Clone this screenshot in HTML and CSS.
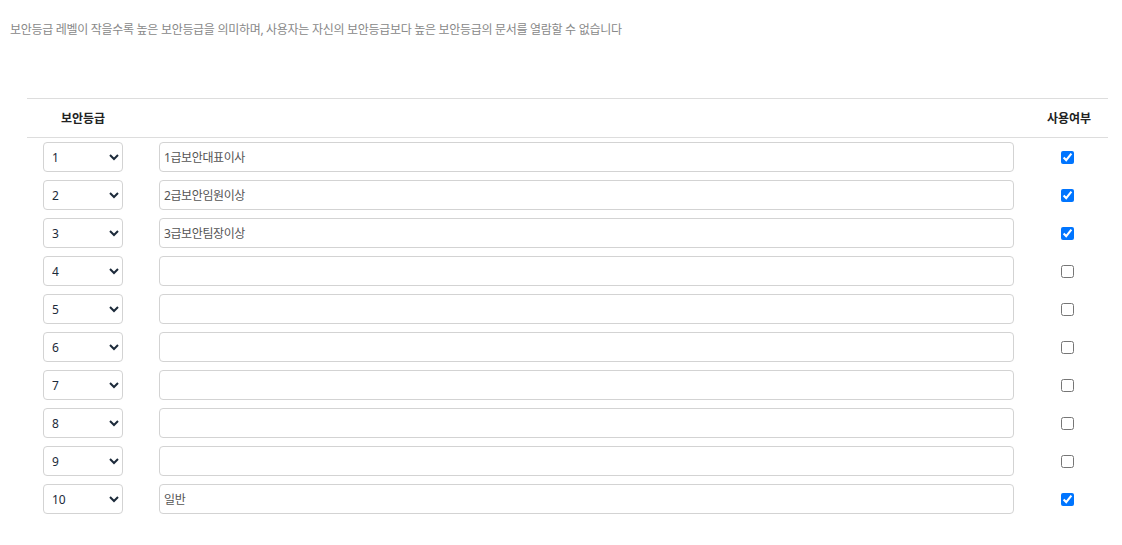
FILE: index.html
```html
<!DOCTYPE html>
<html lang="ko">
<head>
  <meta charset="UTF-8" />
  <meta name="viewport" content="width=device-width, initial-scale=1" />
  <title>보안등급 설정</title>
  <link rel="stylesheet" href="styles.css">
</head>
<body>
  <p class="desc">보안등급 레벨이 작을수록 높은 보안등급을 의미하며, 사용자는 자신의 보안등급보다 높은 보안등급의 문서를 열람할 수 없습니다</p>

  <table class="grade-table">
    <colgroup>
      <col class="col-grade">
      <col>
      <col class="col-use">
    </colgroup>
    <thead>
      <tr>
        <th>보안등급</th>
        <th></th>
        <th>사용여부</th>
      </tr>
    </thead>
    <tbody id="rows"></tbody>
  </table>

<script>
const names = ["1급보안대표이사", "2급보안임원이상", "3급보안팀장이상", "", "", "", "", "", "", "일반"];
const used = [true, true, true, false, false, false, false, false, false, true];

const rows = document.getElementById("rows");
names.forEach((name, i) => {
  let options = "";
  for (let n = 1; n <= 10; n++) {
    options += `<option value="${n}"${n === i + 1 ? " selected" : ""}>${n}</option>`;
  }
  rows.innerHTML += `
    <tr>
      <td><select class="grade-select">${options}</select></td>
      <td><input type="text" class="grade-name" value="${name}" /></td>
      <td class="use"><input type="checkbox"${used[i] ? " checked" : ""} /></td>
    </tr>`;
});
</script>
</body>
</html>
```

FILE: styles.css
```css
body {
  margin: 0;
  padding: 0 14px 0 0;
  font-family: "Noto Sans", "Noto Sans CJK KR", sans-serif;
  background: #fff;
  color: #333;
}

.desc {
  margin: 22px 0 0 10px;
  font-size: 12px;
  line-height: 16px;
  color: #888;
  letter-spacing: -0.3px;
}

.grade-table {
  margin: 60px 0 0 27px;
  width: 1081px;
  border-collapse: collapse;
  table-layout: fixed;
}

.col-grade { width: 112px; }
.col-use { width: 78px; }

.grade-table th {
  height: 38px;
  padding: 0;
  border-top: 1px solid #ddd;
  border-bottom: 1px solid #ddd;
  font-size: 12px;
  font-weight: bold;
  color: #222;
  text-align: center;
  vertical-align: middle;
}

.grade-table td {
  padding: 4px 16px 4px 20px;
  vertical-align: middle;
}

.grade-table td:first-child {
  padding: 4px 16px 4px 16px;
}

.grade-select {
  width: 80px;
  height: 30px;
  padding: 0 4px;
  border: 1px solid #d3d3d3;
  border-radius: 4px;
  background: #fff;
  font-family: "Noto Sans", "Noto Sans CJK KR", sans-serif;
  font-size: 12px;
  color: #1c2a3a;
}

.grade-name {
  display: block;
  width: 100%;
  height: 30px;
  padding: 0 4px;
  box-sizing: border-box;
  border: 1px solid #d3d3d3;
  border-radius: 4px;
  font-family: "Noto Sans", "Noto Sans CJK KR", sans-serif;
  font-size: 12px;
  letter-spacing: -0.4px;
  color: #555;
}

.grade-table td.use {
  padding: 4px 3px 4px 0;
  text-align: center;
}

.use input {
  margin: 0 0 3px;
  width: 13px;
  height: 13px;
  vertical-align: middle;
}
```
